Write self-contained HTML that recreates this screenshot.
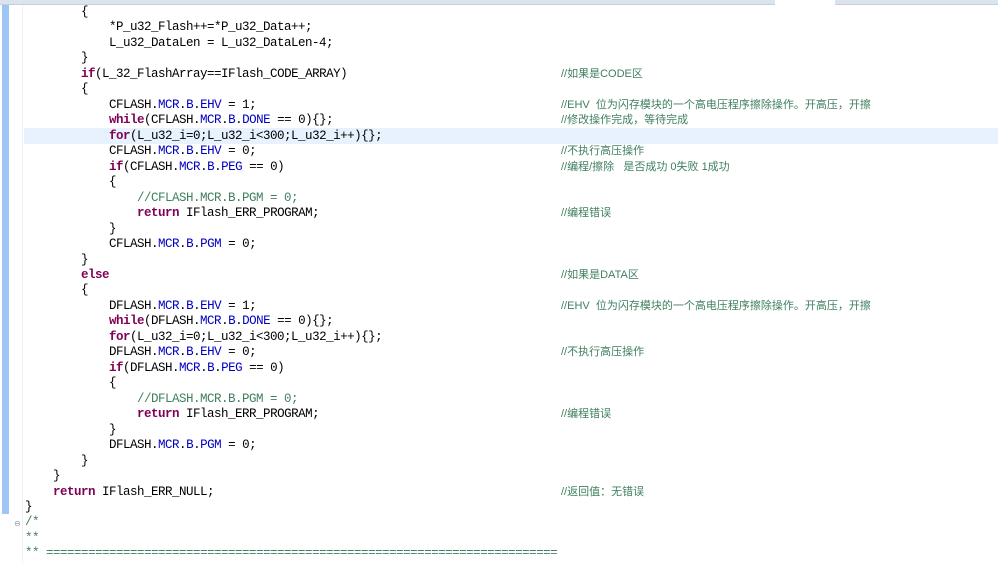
<!DOCTYPE html>
<html><head><meta charset="utf-8"><style>
html,body{margin:0;padding:0;background:#fff;width:998px;height:563px;overflow:hidden;position:relative}
.top{position:absolute;left:0;top:0;width:998px;height:4px;background:#dbe4ee;border-bottom:1px solid #c5d0dc}
.topw{position:absolute;left:775px;top:0;width:60px;height:5px;background:#fff}
.bar{position:absolute;left:2px;top:5px;width:7px;height:509px;background:#9ec5f5}
.gl{position:absolute;left:22px;top:5px;width:1px;height:558px;background:#f0f0f0}
.hl{position:absolute;left:24px;top:128px;width:974px;height:15.5px;background:#e8f2fe}
.code{position:absolute;left:25px;top:5px;font-family:"Liberation Mono","Noto Sans CJK SC",monospace;font-size:12.5px;letter-spacing:-0.5px;color:#000}
.l{height:15.48px;line-height:15.48px;white-space:pre;position:relative}
.c{position:absolute;left:536px;top:0;color:#3f7f5f;font-family:"Liberation Sans","Noto Sans CJK SC",sans-serif;font-size:11px;letter-spacing:0}
.k{color:#7f0055;font-weight:bold}
.f{color:#0000c0}
.g{color:#3f7f5f}
.fold{position:absolute;left:14px;top:519px;font-size:8px;color:#8a9bb0;font-family:"DejaVu Sans",sans-serif}
</style></head><body>
<div class="top"></div><div class="topw"></div>
<div class="bar"></div><div class="gl"></div><div class="hl"></div>
<div class="fold">⊖</div>
<div class="code">
<div class="l">        {</div>
<div class="l">            *P_u32_Flash++=*P_u32_Data++;</div>
<div class="l">            L_u32_DataLen = L_u32_DataLen-4;</div>
<div class="l">        }</div>
<div class="l">        <span class="k">if</span>(L_32_FlashArray==IFlash_CODE_ARRAY)<span class="c">//如果是CODE区</span></div>
<div class="l">        {</div>
<div class="l">            CFLASH.<span class="f">MCR</span>.<span class="f">B</span>.<span class="f">EHV</span> = 1;<span class="c">//EHV  位为闪存模块的一个高电压程序擦除操作。开高压，开擦</span></div>
<div class="l">            <span class="k">while</span>(CFLASH.<span class="f">MCR</span>.<span class="f">B</span>.<span class="f">DONE</span> == 0){};<span class="c">//修改操作完成，等待完成</span></div>
<div class="l">            <span class="k">for</span>(L_u32_i=0;L_u32_i&lt;300;L_u32_i++){};</div>
<div class="l">            CFLASH.<span class="f">MCR</span>.<span class="f">B</span>.<span class="f">EHV</span> = 0;<span class="c">//不执行高压操作</span></div>
<div class="l">            <span class="k">if</span>(CFLASH.<span class="f">MCR</span>.<span class="f">B</span>.<span class="f">PEG</span> == 0)<span class="c">//编程/擦除   是否成功 0失败 1成功</span></div>
<div class="l">            {</div>
<div class="l">                <span class="g">//CFLASH.MCR.B.PGM = 0;</span></div>
<div class="l">                <span class="k">return</span> IFlash_ERR_PROGRAM;<span class="c">//编程错误</span></div>
<div class="l">            }</div>
<div class="l">            CFLASH.<span class="f">MCR</span>.<span class="f">B</span>.<span class="f">PGM</span> = 0;</div>
<div class="l">        }</div>
<div class="l">        <span class="k">else</span><span class="c">//如果是DATA区</span></div>
<div class="l">        {</div>
<div class="l">            DFLASH.<span class="f">MCR</span>.<span class="f">B</span>.<span class="f">EHV</span> = 1;<span class="c">//EHV  位为闪存模块的一个高电压程序擦除操作。开高压，开擦</span></div>
<div class="l">            <span class="k">while</span>(DFLASH.<span class="f">MCR</span>.<span class="f">B</span>.<span class="f">DONE</span> == 0){};</div>
<div class="l">            <span class="k">for</span>(L_u32_i=0;L_u32_i&lt;300;L_u32_i++){};</div>
<div class="l">            DFLASH.<span class="f">MCR</span>.<span class="f">B</span>.<span class="f">EHV</span> = 0;<span class="c">//不执行高压操作</span></div>
<div class="l">            <span class="k">if</span>(DFLASH.<span class="f">MCR</span>.<span class="f">B</span>.<span class="f">PEG</span> == 0)</div>
<div class="l">            {</div>
<div class="l">                <span class="g">//DFLASH.MCR.B.PGM = 0;</span></div>
<div class="l">                <span class="k">return</span> IFlash_ERR_PROGRAM;<span class="c">//编程错误</span></div>
<div class="l">            }</div>
<div class="l">            DFLASH.<span class="f">MCR</span>.<span class="f">B</span>.<span class="f">PGM</span> = 0;</div>
<div class="l">        }</div>
<div class="l">    }</div>
<div class="l">    <span class="k">return</span> IFlash_ERR_NULL;<span class="c">//返回值：无错误</span></div>
<div class="l">}</div>
<div class="l"><span class="g">/*</span></div>
<div class="l"><span class="g">**</span></div>
<div class="l"><span class="g">** =========================================================================</span></div>
</div>
</body></html>
